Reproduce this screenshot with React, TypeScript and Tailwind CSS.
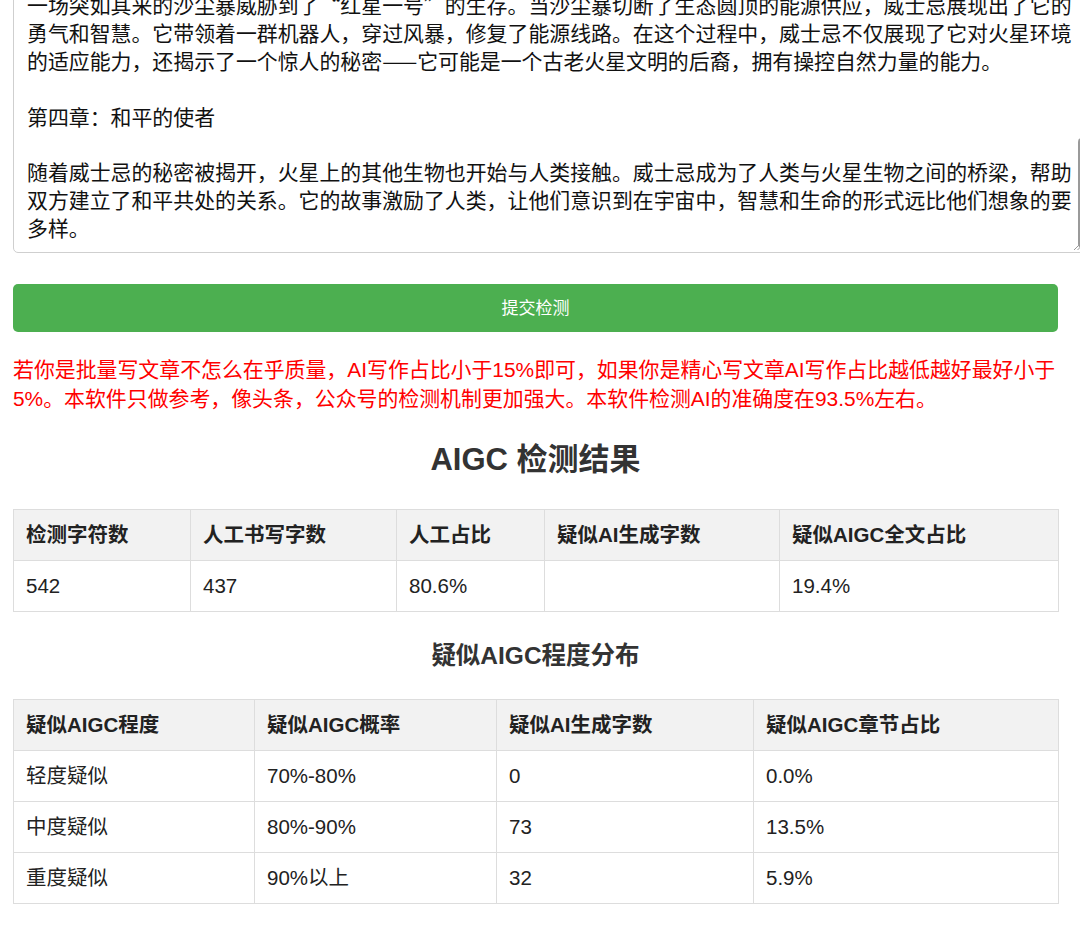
import React from "react";

const textLines = [
  "一场突如其来的沙尘暴威胁到了“红星一号”的生存。当沙尘暴切断了生态圆顶的能源供应，威士忌展现出了它的",
  "勇气和智慧。它带领着一群机器人，穿过风暴，修复了能源线路。在这个过程中，威士忌不仅展现了它对火星环境",
  "的适应能力，还揭示了一个惊人的秘密——它可能是一个古老火星文明的后裔，拥有操控自然力量的能力。",
  "",
  "第四章：和平的使者",
  "",
  "随着威士忌的秘密被揭开，火星上的其他生物也开始与人类接触。威士忌成为了人类与火星生物之间的桥梁，帮助",
  "双方建立了和平共处的关系。它的故事激励了人类，让他们意识到在宇宙中，智慧和生命的形式远比他们想象的要",
  "多样。",
];

const t1Head = ["检测字符数", "人工书写字数", "人工占比", "疑似AI生成字数", "疑似AIGC全文占比"];
const t1Row = ["542", "437", "80.6%", "", "19.4%"];
const t1Widths = [177, 206, 148, 235, 279];

const t2Head = ["疑似AIGC程度", "疑似AIGC概率", "疑似AI生成字数", "疑似AIGC章节占比"];
const t2Rows = [
  ["轻度疑似", "70%-80%", "0", "0.0%"],
  ["中度疑似", "80%-90%", "73", "13.5%"],
  ["重度疑似", "90%以上", "32", "5.9%"],
];
const t2Widths = [241, 242, 257, 305];

function DataTable({ head, rows, widths }: { head: string[]; rows: string[][]; widths: number[] }) {
  return (
    <table className="w-[1045px] table-fixed border-collapse text-[20.5px] text-[#222]">
      <colgroup>
        {widths.map((w, i) => (
          <col key={i} style={{ width: w }} />
        ))}
      </colgroup>
      <thead>
        <tr className="bg-[#f2f2f2]">
          {head.map((h, i) => (
            <th
              key={i}
              className="border border-[#dddddd] px-[12px] py-[13px] text-left font-bold leading-[24px] whitespace-nowrap"
            >
              {h}
            </th>
          ))}
        </tr>
      </thead>
      <tbody>
        {rows.map((r, ri) => (
          <tr key={ri} className="bg-white">
            {r.map((c, ci) => (
              <td
                key={ci}
                className="border border-[#dddddd] px-[12px] py-[13px] text-left leading-[24px] whitespace-nowrap"
              >
                {c}
              </td>
            ))}
          </tr>
        ))}
      </tbody>
    </table>
  );
}

export default function App() {
  return (
    <div
      className="h-[925px] w-full overflow-hidden bg-white"
      style={{ fontFamily: '"Liberation Sans", "Noto Sans CJK SC", sans-serif' }}
    >
      <div className="ml-[13px] w-[1045px]">
        {/* textarea-like box, scrolled partially above the viewport */}
        <div className="relative -mt-[23px] w-[1079px] rounded-[5px] border border-[#cfcfcf] bg-white pt-[13px] pb-[10px] pl-[13px]">
          <div
            className="whitespace-pre text-[20.9px] leading-[27.9px] text-[#111]"
            style={{ fontFamily: '"Noto Sans CJK SC", "Liberation Sans", sans-serif' }}
          >
            {textLines.map((l, i) => (
              <div key={i} className="h-[27.9px]">
                {l}
              </div>
            ))}
          </div>
          <div className="absolute left-[1064px] top-[160px] h-[110px] w-[8px] rounded-[4px] bg-[#9a9a9a]" />
          <svg className="absolute left-[1059px] bottom-[1px] h-[9px] w-[9px]" viewBox="0 0 9 9">
            <line x1="1" y1="8" x2="8" y2="1" stroke="#9a9a9a" strokeWidth="1" />
            <line x1="4.5" y1="8" x2="8" y2="4.5" stroke="#9a9a9a" strokeWidth="1" />
          </svg>
        </div>

        <button
          type="button"
          className="mt-[31px] flex h-[48px] w-[1045px] items-center justify-center rounded-[5px] bg-[#4caf50] pt-[2px] text-[17px] text-white"
        >
          提交检测
        </button>

        <p className="mt-[23px] text-[20.9px] leading-[29px] whitespace-nowrap text-[#ff0000]">
          若你是批量写文章不怎么在乎质量，AI写作占比小于15%即可，如果你是精心写文章AI写作占比越低越好最好小于
          <br />
          5%。本软件只做参考，像头条，公众号的检测机制更加强大。本软件检测AI的准确度在93.5%左右。
        </p>

        <h2 className="mt-[28px] text-center text-[31px] font-bold leading-[37px] text-[#333]">AIGC 检测结果</h2>

        <div className="mt-[31px]">
          <DataTable head={t1Head} rows={[t1Row]} widths={t1Widths} />
        </div>

        <h3 className="mt-[29px] text-center text-[24.5px] font-bold leading-[30px] text-[#333]">疑似AIGC程度分布</h3>

        <div className="mt-[28px]">
          <DataTable head={t2Head} rows={t2Rows} widths={t2Widths} />
        </div>
      </div>
    </div>
  );
}
